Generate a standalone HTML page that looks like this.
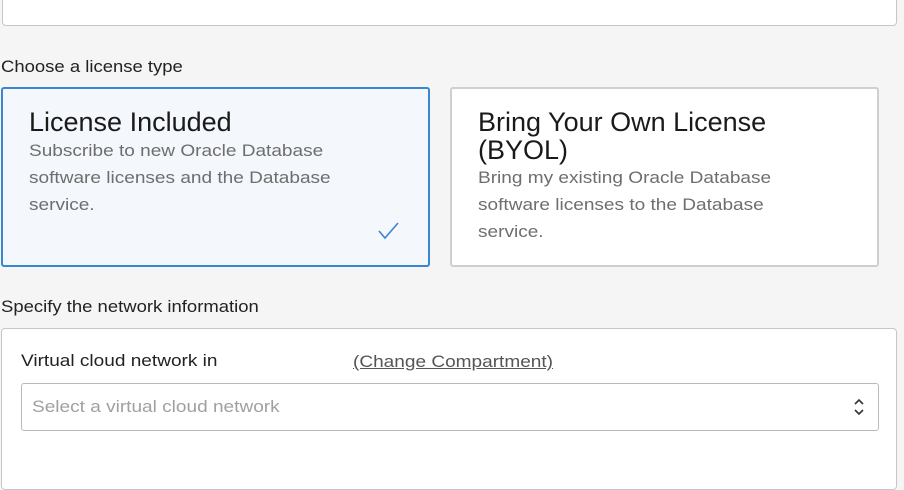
<!DOCTYPE html>
<html><head><style>
body{margin:0;width:904px;height:476px;background:#f5f5f5;font-family:"Liberation Sans",Arial,sans-serif;position:relative;overflow:hidden;color:#222}
.abs{position:absolute}
.sx{transform:scaleX(1.12);transform-origin:0 0;white-space:nowrap}
.top{left:2px;top:-6px;width:893px;height:30px;background:#fff;border:1px solid #c6c6c6;border-radius:4px}
.lbl{font-size:16.5px;color:#222}
.card{top:87px;height:180px;border-radius:3px;box-sizing:border-box}
.c1{left:1px;width:429px;background:#f4f7fc;border:2px solid #3a86d0}
.c2{left:450px;width:429px;background:#fff;border:2px solid #cfcfcf}
.t{position:absolute;left:26px;top:19px;font-size:27px;color:#1a1a1a;line-height:28px;white-space:nowrap}
.d{position:absolute;left:26px;font-size:17px;line-height:27px;color:#6e6e6e}
.panel{left:1px;top:328px;width:894px;height:160px;background:#fff;border:1px solid #c6c6c6;border-radius:4px}
.sel{left:21px;top:383px;width:856px;height:46px;border:1px solid #b9b9b9;border-radius:3px;background:#fff}
</style></head><body>
<div class="abs top"></div>
<div class="abs lbl sx" style="left:1px;top:58px">Choose a license type</div>
<div class="abs card c1">
 <div class="t">License Included</div>
 <div class="d sx" style="top:48px">Subscribe to new Oracle Database<br>software licenses and the Database<br>service.</div>
 <svg class="abs" style="left:374px;top:132px" width="24" height="20"><path d="M2 10 L8 17 L21 2" fill="none" stroke="#3a86d0" stroke-width="1.6"/></svg>
</div>
<div class="abs card c2">
 <div class="t">Bring Your Own License<br>(BYOL)</div>
 <div class="d sx" style="top:75px">Bring my existing Oracle Database<br>software licenses to the Database<br>service.</div>
</div>
<div class="abs lbl sx" style="left:1px;top:298px">Specify the network information</div>
<div class="abs panel"></div>
<div class="abs sx" style="left:21px;top:351px;font-size:17px;color:#222">Virtual cloud network in</div>
<div class="abs sx" style="left:353px;top:352px;font-size:17px;color:#555;text-decoration:underline">(Change Compartment)</div>
<div class="abs sel">
 <div class="abs sx" style="left:10px;top:13px;font-size:17px;color:#a0a0a0">Select a virtual cloud network</div>
 <svg class="abs" style="left:831px;top:14px" width="12" height="18"><path d="M2 6 L6 2 L10 6 M2 12 L6 16 L10 12" fill="none" stroke="#333" stroke-width="1.6"/></svg>
</div>
</body></html>
